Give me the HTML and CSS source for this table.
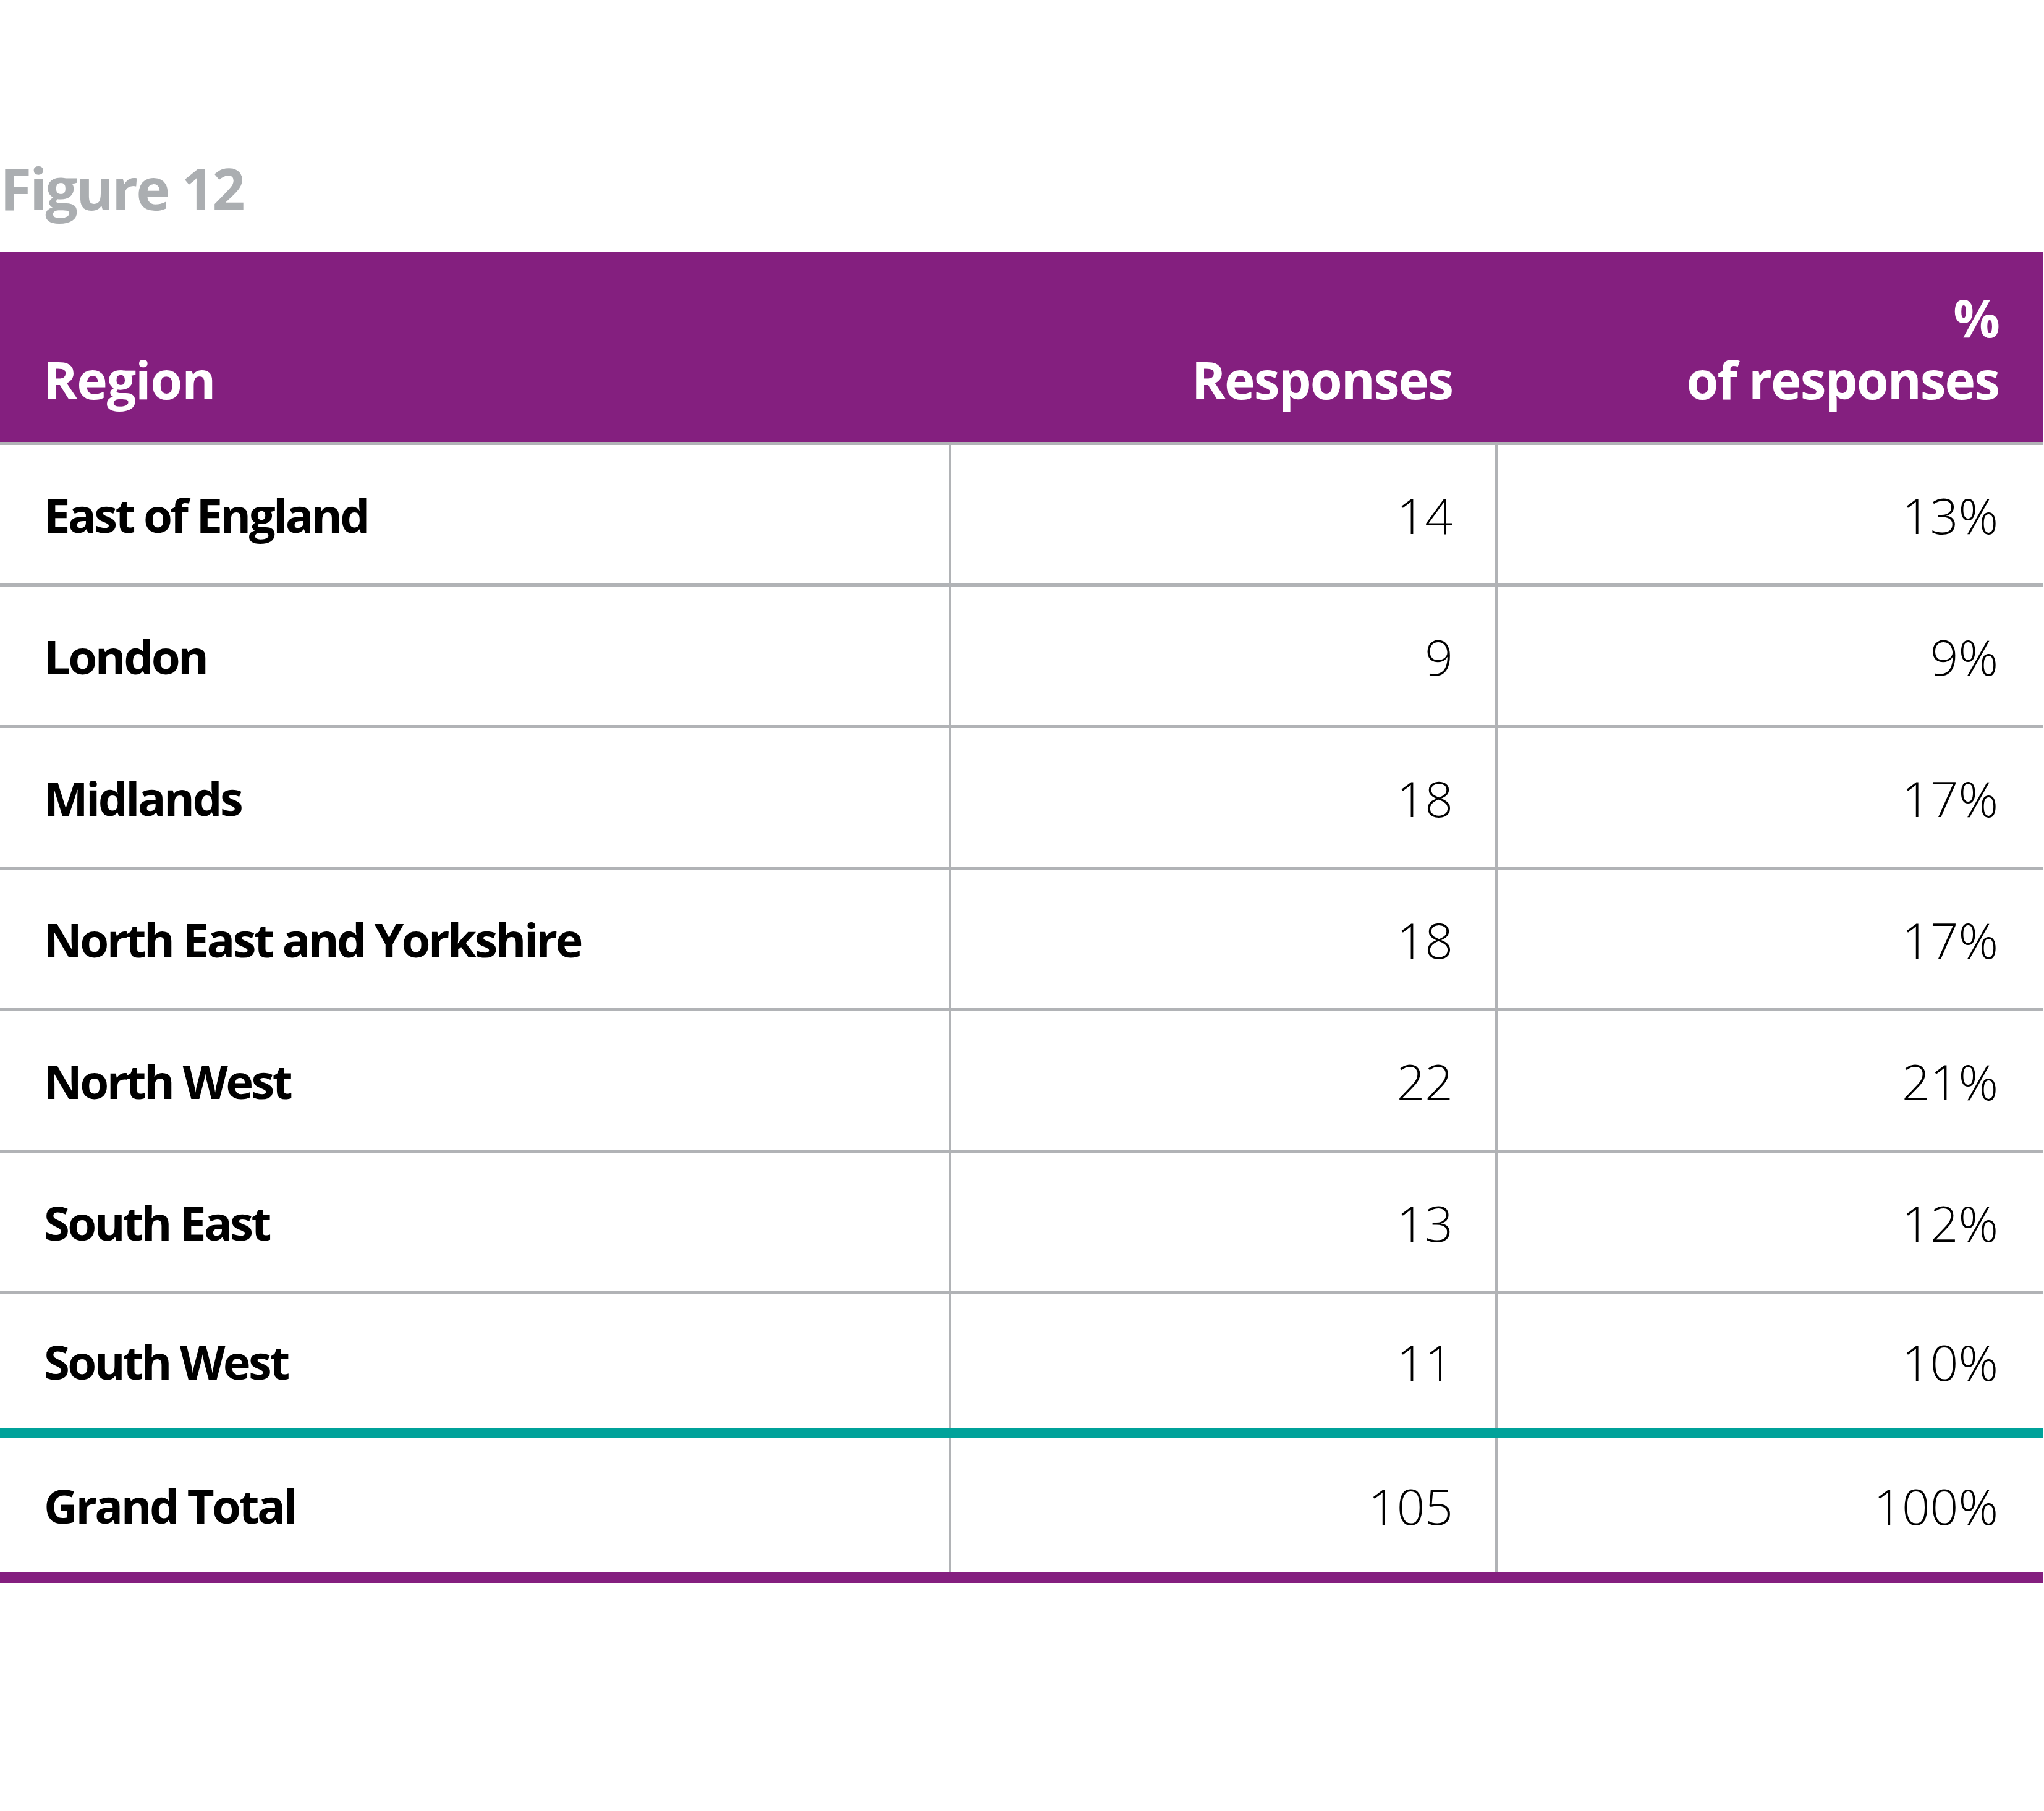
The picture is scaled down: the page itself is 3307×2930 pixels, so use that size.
FILE: index.html
```html
<!DOCTYPE html>
<html lang="en">
<head>
<meta charset="utf-8">
<title>Figure 12</title>
<link rel="stylesheet" href="styles.css">
</head>
<body>
<main class="page">
  <h2 class="fig-title">Figure 12</h2>
  <div class="tbl" role="table">
    <div class="row head" role="row">
      <div class="cell label" role="columnheader"><span class="line">Region</span></div>
      <div class="cell num resp" role="columnheader"><span class="line">Responses</span></div>
      <div class="cell num pct" role="columnheader"><span class="line">%</span><span class="line">of responses</span></div>
    </div>
    <div class="row body" role="row">
      <div class="cell label" role="cell">East of England</div>
      <div class="cell num resp" role="cell">14</div>
      <div class="cell num pct" role="cell">13%</div>
    </div>
    <div class="row body" role="row">
      <div class="cell label" role="cell">London</div>
      <div class="cell num resp" role="cell">9</div>
      <div class="cell num pct" role="cell">9%</div>
    </div>
    <div class="row body" role="row">
      <div class="cell label" role="cell">Midlands</div>
      <div class="cell num resp" role="cell">18</div>
      <div class="cell num pct" role="cell">17%</div>
    </div>
    <div class="row body" role="row">
      <div class="cell label" role="cell">North East and Yorkshire</div>
      <div class="cell num resp" role="cell">18</div>
      <div class="cell num pct" role="cell">17%</div>
    </div>
    <div class="row body" role="row">
      <div class="cell label" role="cell">North West</div>
      <div class="cell num resp" role="cell">22</div>
      <div class="cell num pct" role="cell">21%</div>
    </div>
    <div class="row body" role="row">
      <div class="cell label" role="cell">South East</div>
      <div class="cell num resp" role="cell">13</div>
      <div class="cell num pct" role="cell">12%</div>
    </div>
    <div class="row body last" role="row">
      <div class="cell label" role="cell">South West</div>
      <div class="cell num resp" role="cell">11</div>
      <div class="cell num pct" role="cell">10%</div>
    </div>
    <div class="row total" role="row">
      <div class="cell label" role="cell">Grand Total</div>
      <div class="cell num resp" role="cell">105</div>
      <div class="cell num pct" role="cell">100%</div>
    </div>
  </div>
</main>
</body>
</html>
```

FILE: styles.css
```css
html, body {
  margin: 0;
  padding: 0;
  background: #ffffff;
}

.page {
  padding-top: 258px;
  font-family: "Open Sans", "Noto Sans", "Liberation Sans", sans-serif;
  color: #000000;
}

.fig-title {
  margin: 0 0 56px 0;
  font-size: 93px;
  line-height: 93px;
  font-weight: 700;
  letter-spacing: -3px;
  color: #abaeb1;
}

.tbl {
  width: 3305px;
}

.row {
  display: grid;
  grid-template-columns: 1539px 884px 1fr;
  border-bottom: 5px solid #b1b3b6;
}

.cell {
  box-sizing: border-box;
}

/* header */
.head {
  height: 308px;
  background: #841f7f;
  align-items: end;
  color: #ffffff;
}

.head .cell {
  display: flex;
  flex-direction: column;
  font-size: 84px;
  font-weight: 700;
  letter-spacing: -2px;
  padding-bottom: 51px;
}

.head .line {
  display: block;
  height: 100px;
  line-height: 100px;
}

.head .label {
  padding-left: 70px;
  letter-spacing: -1.2px;
}

.head .num {
  align-items: flex-end;
  text-align: right;
}

.head .resp {
  padding-right: 73px;
}

.head .pct {
  padding-right: 71px;
}

/* body rows */
.body {
  height: 224px;
}

.body.last {
  height: 216px;
  border-bottom: 16px solid #00a29a;
}

.total {
  height: 218px;
  border-bottom: 17px solid #841f7f;
}

.body .cell,
.total .cell {
  display: flex;
  align-items: center;
}

.body .label,
.total .label {
  padding-left: 71px;
  font-size: 76px;
  font-weight: 700;
  letter-spacing: -3.6px;
  border-right: 4px solid #b1b3b6;
}

.body .num,
.total .num {
  justify-content: flex-end;
  font-size: 80px;
  font-weight: 300;
}

.body .resp,
.total .resp {
  padding-right: 68px;
  border-right: 4px solid #b1b3b6;
}

.body .pct,
.total .pct {
  padding-right: 72px;
}
```
